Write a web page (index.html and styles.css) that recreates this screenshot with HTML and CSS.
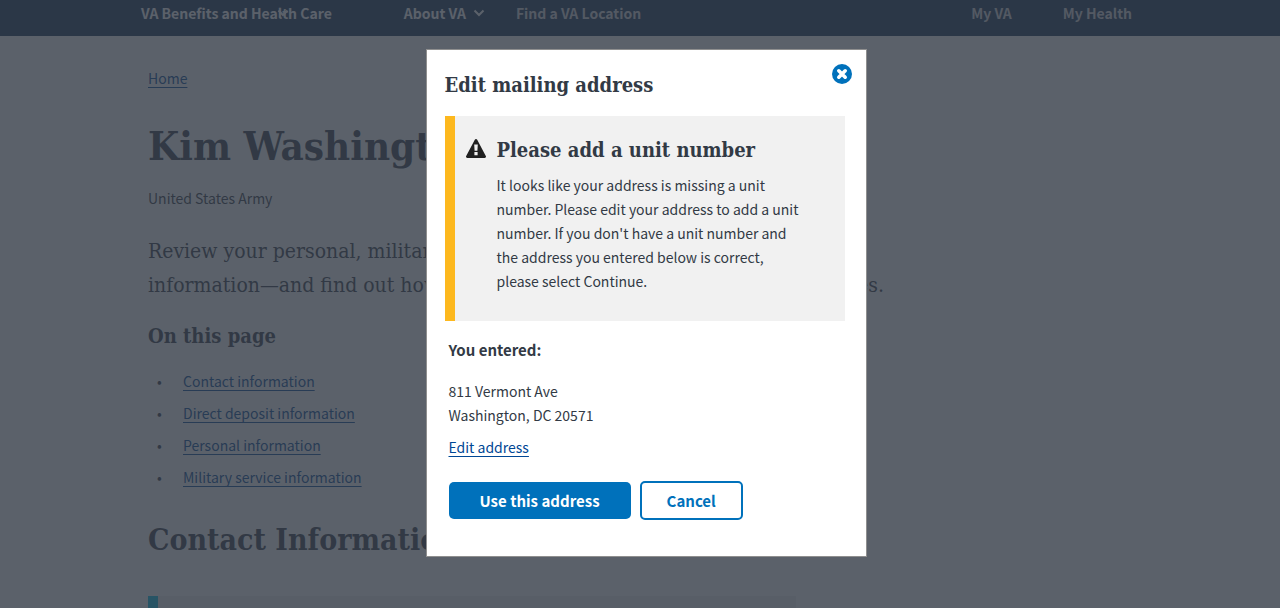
FILE: index.html
```html
<!DOCTYPE html>
<html lang="en">
<head>
<meta charset="utf-8">
<meta name="viewport" content="width=device-width, initial-scale=1">
<title>Edit mailing address</title>
<link rel="stylesheet" href="styles.css">
</head>
<body>
<header class="site-header">
  <nav class="nav" aria-label="Main">
    <button class="nav-item nav-item-benefits" type="button">VA Benefits and Health Care
      <svg class="chevron chevron-over" viewBox="0 0 12 8" aria-hidden="true"><path d="M1.500 1.500 6 6l4.500-4.500"/></svg>
    </button>
    <button class="nav-item nav-item-about" type="button">About VA
      <svg class="chevron" viewBox="0 0 12 8" aria-hidden="true"><path d="M1.500 1.500 6 6l4.500-4.500"/></svg>
    </button>
    <a class="nav-item nav-item-muted" href="#">Find a VA Location</a>
  </nav>
  <nav class="nav nav-account" aria-label="Account">
    <a class="nav-item nav-item-muted" href="#">My VA</a>
    <a class="nav-item nav-item-muted" href="#">My Health</a>
  </nav>
</header>

<main class="page">
  <nav class="breadcrumb" aria-label="Breadcrumb"><a class="link" href="#">Home</a></nav>
  <h1 class="profile-name">Kim Washington</h1>
  <p class="branch">United States Army</p>
  <p class="intro">Review your personal, military, and contact<br>information—and find out how to make any needed updates or new changes.</p>
  <h2 class="toc-title">On this page</h2>
  <ul class="toc">
    <li class="toc-item"><a class="link" href="#contact">Contact information</a></li>
    <li class="toc-item"><a class="link" href="#">Direct deposit information</a></li>
    <li class="toc-item"><a class="link" href="#">Personal information</a></li>
    <li class="toc-item"><a class="link" href="#">Military service information</a></li>
  </ul>
  <h2 class="section-title" id="contact">Contact Information</h2>
  <div class="info-box"></div>
</main>

<div class="overlay">
  <section class="modal" role="dialog" aria-modal="true" aria-labelledby="modal-title">
    <div class="modal-head">
      <h2 class="modal-title" id="modal-title">Edit mailing address</h2>
      <button class="close" type="button" aria-label="Close">
        <svg class="close-icon" viewBox="0 0 20 20" aria-hidden="true">
          <circle cx="10" cy="10" r="10" fill="#0071bb"/>
          <path d="M6.800 6.800l6.400 6.400M13.200 6.800l-6.400 6.400" stroke="#fff" stroke-width="3.600" stroke-linecap="round"/>
        </svg>
      </button>
    </div>
    <div class="alert" role="alert">
      <svg class="alert-icon" viewBox="0 0 20 20" aria-hidden="true">
        <path d="M8.800.8a1.400 1.400 0 0 1 2.400 0l8.600 16.100a1.400 1.400 0 0 1-1.200 2.100H1.400a1.400 1.400 0 0 1-1.200-2.100z" fill="#212121"/>
        <path d="M8.200 5.600h3.600l-.4 6.200H8.600zM8.400 13h3.200v3.200H8.400z" fill="#f1f1f1"/>
      </svg>
      <div class="alert-body">
        <h3 class="alert-title">Please add a unit number</h3>
        <p class="alert-text">It looks like your address is missing a unit number. Please edit your address to add a unit number. If you don't have a unit number and the address you entered below is correct, please select Continue.</p>
      </div>
    </div>
    <div class="entered">
      <h3 class="entered-title">You entered:</h3>
      <address class="address">811 Vermont Ave<br>Washington, DC 20571</address>
      <a class="link" href="#">Edit address</a>
      <div class="actions">
        <button class="btn btn-primary" type="button">Use this address</button>
        <button class="btn btn-secondary" type="button">Cancel</button>
      </div>
    </div>
  </section>
</div>
</body>
</html>
```

FILE: styles.css
```css
:root {
  --sans: "Noto Sans CJK JP", "Open Sans", sans-serif;
  --serif: "DejaVu Serif Condensed", "DejaVu Serif", serif;
  --ink: #323a45;
  --blue: #0071bb;
  --link: #004795;
}

* {
  box-sizing: border-box;
}

body {
  display: flex;
  flex-direction: column;
  margin: 0;
  min-height: 100vh;
  background: #fff;
  color: var(--ink);
  font: 14px/24px var(--sans);
}

h1, h2, h3, p, ul {
  margin: 0;
}

.site-header {
  display: flex;
  justify-content: space-between;
  height: 36px;
  padding: 0 148px 0 141px;
  background: #112e51;
}

.nav {
  display: flex;
  align-items: flex-start;
}

.nav-account {
  gap: 51px;
}

.nav-item {
  display: flex;
  align-items: center;
  gap: 7px;
  padding: 0;
  border: 0;
  background: none;
  color: #fff;
  font: bold 14px/26px var(--sans);
  text-decoration: none;
  white-space: nowrap;
}

.nav-item-benefits {
  position: relative;
  margin-right: 72px;
}

.nav-item-about {
  margin-right: 31px;
}

.nav-item-muted {
  color: #d6d7d9;
}

.chevron {
  width: 12px;
  height: 8px;
  fill: none;
  stroke: currentColor;
  stroke-width: 2;
}

.chevron-over {
  position: absolute;
  left: 136px;
  top: 9px;
}

.page {
  display: flex;
  flex: 1;
  flex-direction: column;
  padding: 30px 148px 0;
}

.link {
  color: var(--link);
  text-decoration: underline;
  text-decoration-skip-ink: none;
  text-decoration-thickness: 1px;
  text-underline-offset: 3px;
}

.profile-name {
  margin-top: 29px;
  font: bold 40px/54px var(--serif);
}

.branch {
  margin-top: 13px;
}

.intro {
  margin-top: 24px;
  font: 21px/34px var(--serif);
}

.toc-title {
  margin-top: 18px;
  font: bold 20px/32px var(--serif);
}

.toc {
  margin-top: 17px;
  padding-left: 35px;
}

.toc-item {
  margin-bottom: 8px;
  list-style: none;
}

.toc-item::before {
  content: "•";
  display: inline-block;
  width: 26px;
  margin-left: -26px;
}

.section-title {
  margin-top: 23px;
  font: bold 30px/40px var(--serif);
}

.info-box {
  flex: 1;
  max-width: 648px;
  margin-top: 36px;
  border-left: 10px solid #02bfe7;
  background: #f1f1f1;
}

.overlay {
  position: fixed;
  inset: 0;
  display: flex;
  align-items: flex-start;
  justify-content: center;
  padding: 49px 0 0 12px;
  background: rgba(50, 58, 69, 0.8);
}

.modal {
  width: 441px;
  max-width: 100%;
  padding: 14px 21px 36px 18px;
  border: 1px solid #8f8f8f;
  background: #fff;
}

.modal-head {
  display: flex;
  justify-content: space-between;
  margin-right: -7px;
}

.modal-title {
  padding-top: 5px;
  font: bold 20px/32px var(--serif);
}

.close {
  height: 20px;
  padding: 0;
  border: 0;
  background: none;
}

.close-icon {
  display: block;
  width: 20px;
  height: 20px;
}

.alert {
  display: flex;
  gap: 11px;
  margin-top: 15px;
  padding: 18px 38px 28px 11px;
  border-left: 10px solid #fdb81e;
  background: #f1f1f1;
}

.alert-icon {
  flex: none;
  width: 20px;
  height: 20px;
  margin-top: 5px;
}

.alert-title {
  font: bold 20px/32px var(--serif);
  white-space: nowrap;
}

.alert-text {
  margin-top: 7px;
}

.entered {
  padding: 17px 0 0 4px;
}

.entered-title {
  font: bold 15px/24px var(--sans);
}

.address {
  margin: 17px 0 8px;
  font-style: normal;
}

.actions {
  display: flex;
  align-items: center;
  gap: 9px;
  margin-top: 22px;
}

.btn {
  border: 0;
  border-radius: 5px;
  font: bold 15px/24px var(--sans);
}

.btn-primary {
  height: 37px;
  padding: 0 31px;
  background: var(--blue);
  color: #fff;
}

.btn-secondary {
  height: 39px;
  padding: 0 25px;
  border: 2px solid var(--blue);
  background: #fff;
  color: var(--blue);
}
```
